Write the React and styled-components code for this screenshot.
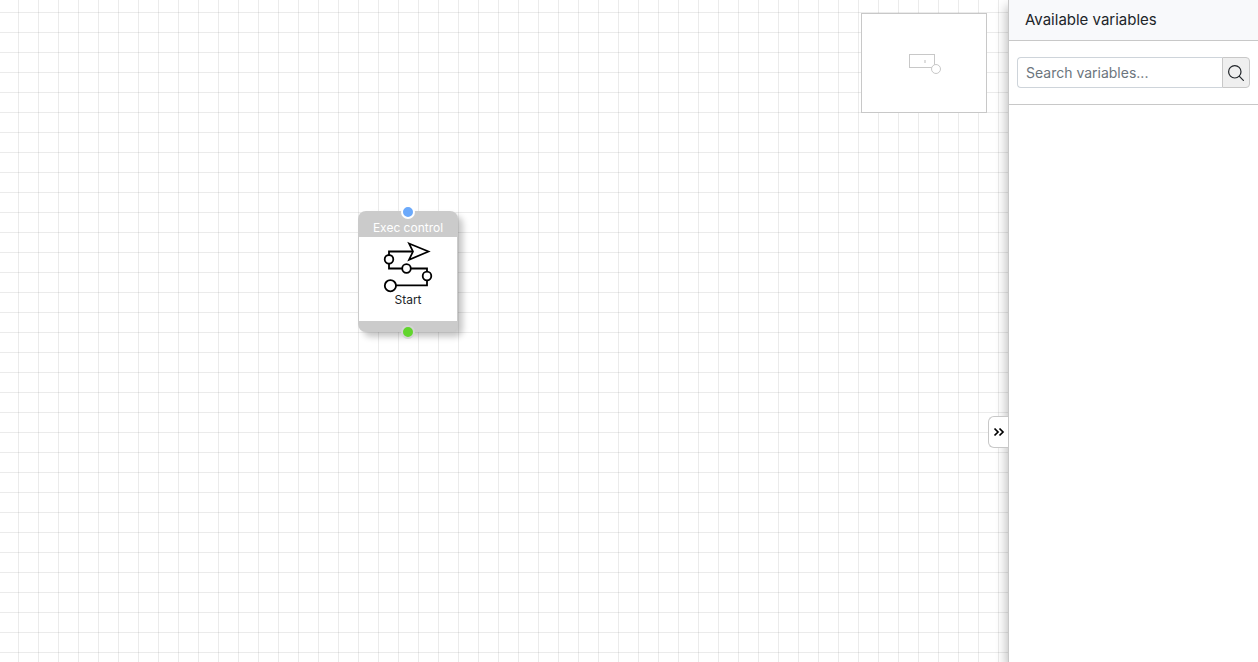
import React, { useState } from "react";
import styled, { createGlobalStyle } from "styled-components";

const GlobalStyle = createGlobalStyle`
  *, *::before, *::after { box-sizing: border-box; }
  body {
    margin: 0;
    background: #fff;
    color: #212529;
    font-family: Inter, "Liberation Sans", sans-serif;
  }
`;

const Editor = styled.div`
  display: flex;
  min-height: 100vh;
  overflow: hidden;
`;

const Canvas = styled.main`
  position: relative;
  flex: 1;
  min-width: 0;
  background-color: #fff;
  background-image:
    linear-gradient(to right, rgba(0, 0, 0, 0.08) 1px, transparent 1px),
    linear-gradient(to bottom, rgba(0, 0, 0, 0.08) 1px, transparent 1px);
  background-size: 20px 20px;
  background-position: 18px 12px;
`;

const Minimap = styled.div`
  position: absolute;
  top: 13px;
  right: 21px;
  width: 126px;
  height: 100px;
  border: 1px solid #c8c8c8;
  background: #fff;

  svg { display: block; }
`;

const Node = styled.section`
  position: absolute;
  left: ${(p) => p.$x}px;
  top: ${(p) => p.$y}px;
  display: flex;
  flex-direction: column;
  width: 100px;
  height: 121px;
  padding: 0 1px;
  border-radius: 8px;
  background: #cbcbcb;
  box-shadow: 5px 5px 6px rgba(0, 0, 0, 0.22);
  font-size: 12px;
  text-align: center;
`;

const NodeHeader = styled.header`
  height: 26px;
  padding-top: 10px;
  line-height: 14px;
  color: #fff;
`;

const NodeBody = styled.div`
  display: flex;
  flex-direction: column;
  align-items: center;
  height: 84px;
  padding-top: 4px;
  background: #fff;
  line-height: 14px;
`;

const Port = styled.span`
  position: absolute;
  left: 43px;
  ${(p) => p.$side}: ${(p) => (p.$side === "top" ? -6 : -7)}px;
  width: 14px;
  height: 14px;
  border: 2px solid ${(p) => p.$ring};
  border-radius: 50%;
  background: ${(p) => p.$color};
`;

const CollapseButton = styled.button`
  position: absolute;
  right: 0;
  top: 416px;
  z-index: 2;
  display: flex;
  align-items: center;
  justify-content: center;
  width: 20px;
  height: 32px;
  padding: 0;
  border: 1px solid #c8c8c8;
  border-right: 0;
  border-radius: 6px 0 0 6px;
  background: #fff;
  color: #000;
  cursor: pointer;
`;

const Panel = styled.aside`
  position: relative;
  flex: 0 0 250px;
  min-width: 0;
  border-left: 1px solid #c8c8c8;
  background: #fff;
  box-shadow: -2px 6px 10px rgba(0, 0, 0, 0.25);
`;

const PanelTitle = styled.h2`
  margin: 0;
  padding: 8px 16px;
  border-bottom: 1px solid #c8c8c8;
  background: #f8f9fb;
  font-size: 15px;
  font-weight: 400;
  line-height: 24px;
`;

const SearchForm = styled.form`
  display: flex;
  padding: 16px 8px;
  border-bottom: 1px solid #c8c8c8;
`;

const SearchInput = styled.input`
  flex: 1;
  min-width: 0;
  height: 31px;
  padding: 0 8px;
  border: 1px solid #ced4da;
  border-right: 0;
  border-radius: 4px 0 0 4px;
  background: #fff;
  font: 14px Inter, "Liberation Sans", sans-serif;
  color: #212529;

  &::placeholder { color: #6c757d; opacity: 1; }
`;

const SearchButton = styled.button`
  display: flex;
  align-items: center;
  justify-content: center;
  width: 28px;
  height: 31px;
  padding: 0;
  border: 1px solid #c8c8c8;
  border-radius: 0 4px 4px 0;
  background: #efefef;
  color: #212529;
  cursor: pointer;
`;

function FlowIcon() {
  return (
    <svg width="52" height="52" viewBox="0 0 52 52" fill="none" stroke="#000" strokeWidth="1.8" aria-hidden="true">
      <path d="M8 44.4H45V27.5H7V10.5H30" />
      <path d="M27 2.5L46.5 10.5L27 18.8L31 10.5Z" fill="#fff" strokeWidth="1.7" />
      <g fill="#fff" strokeWidth="1.8">
        <circle cx="8.4" cy="44.7" r="5.6" />
        <circle cx="45" cy="35" r="4.3" />
        <circle cx="24.5" cy="27.5" r="4.3" />
        <circle cx="7" cy="18.3" r="4.3" />
      </g>
    </svg>
  );
}

export default function App() {
  const [open, setOpen] = useState(true);
  const [query, setQuery] = useState("");
  return (
    <>
      <GlobalStyle />
      <Editor>
        <Canvas>
          <Minimap>
            <svg width="124" height="98" fill="#fff" stroke="#c8c8c8" aria-hidden="true">
              <rect x="47.5" y="40.5" width="25" height="13" />
              <circle cx="74" cy="55" r="4.5" />
              <rect x="62" y="46" width="2" height="3" fill="#dedede" stroke="none" />
            </svg>
          </Minimap>
          <Node $x={358} $y={211}>
            <NodeHeader>Exec control</NodeHeader>
            <NodeBody>
              <FlowIcon />
              <span>Start</span>
            </NodeBody>
            <Port $side="top" $color="#6ba9fb" $ring="#fff" />
            <Port $side="bottom" $color="#61d52d" $ring="#d4d4d4" />
          </Node>
          <CollapseButton type="button" aria-label="Toggle variables panel" onClick={() => setOpen(!open)}>
            <svg width="12" height="12" viewBox="0 0 12 12" fill="none" stroke="currentColor" strokeWidth="1.7" aria-hidden="true">
              <path d="M1.5 2.5L5 6L1.5 9.5M6.5 2.5L10 6L6.5 9.5" />
            </svg>
          </CollapseButton>
        </Canvas>
        {open && (
          <Panel>
            <PanelTitle>Available variables</PanelTitle>
            <SearchForm onSubmit={(e) => e.preventDefault()}>
              <SearchInput
                type="text"
                aria-label="Search variables"
                placeholder="Search variables..."
                value={query}
                onChange={(e) => setQuery(e.target.value)}
              />
              <SearchButton type="submit" aria-label="Search">
                <svg width="16" height="16" viewBox="0 0 16 16" fill="none" stroke="currentColor" strokeWidth="1.2" aria-hidden="true">
                  <circle cx="6.8" cy="6.8" r="6.2" />
                  <path d="M11.2 11.2L15.8 15.8" />
                </svg>
              </SearchButton>
            </SearchForm>
          </Panel>
        )}
      </Editor>
    </>
  );
}
